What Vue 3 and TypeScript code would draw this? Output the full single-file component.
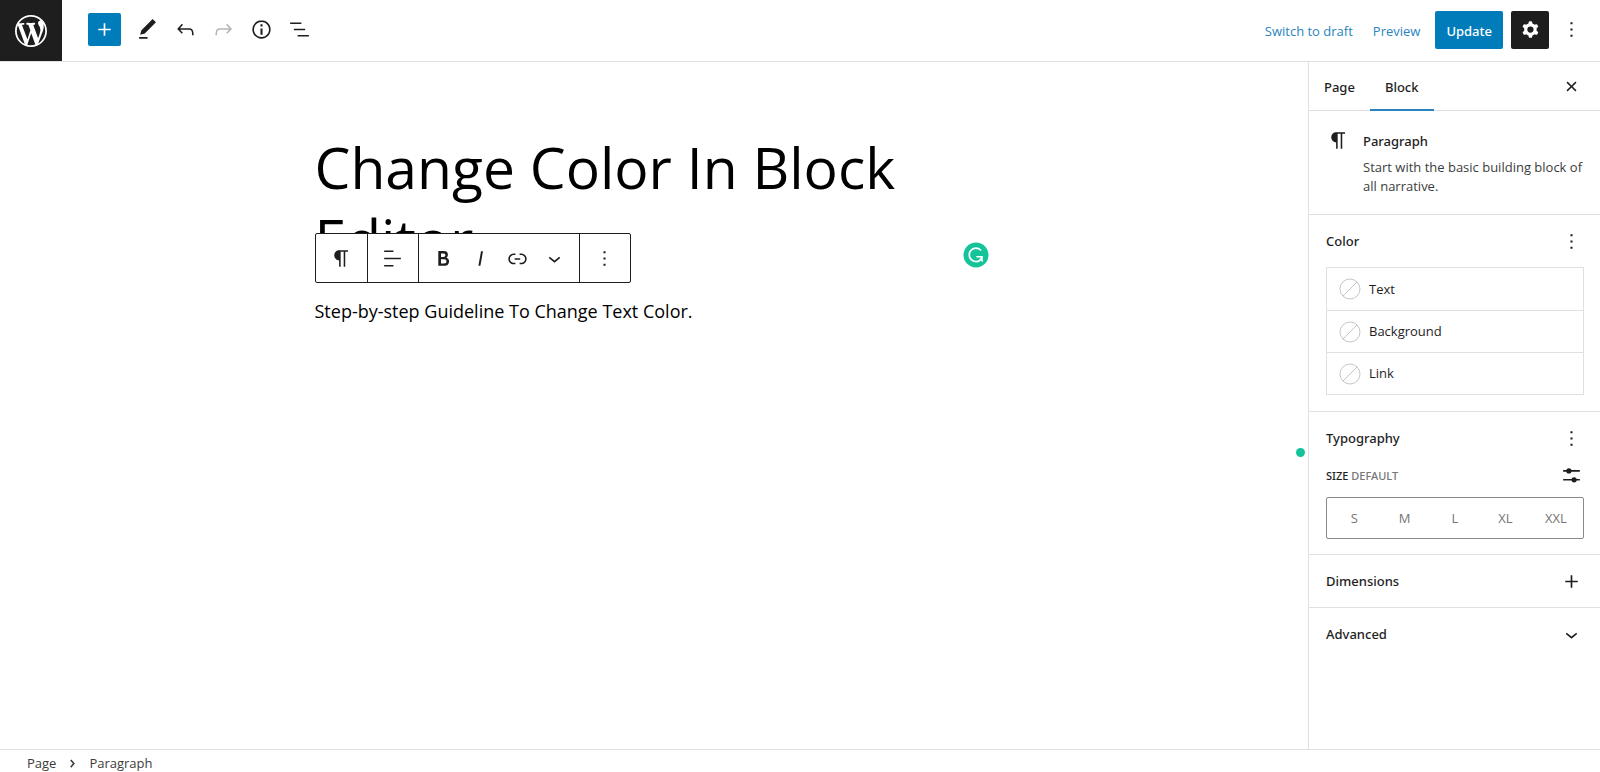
<script setup lang="ts">
import { ref } from 'vue'

const icons = {
  plus: 'M18 11.2h-5.2V6h-1.6v5.2H6v1.6h5.2V18h1.6v-5.2H18z',
  edit: 'M20.1 5.1L16.9 2 6.2 12.7l-1.3 4.4 4.5-1.3L20.1 5.1zM4 20.8h8v-1.5H4v1.5z',
  undo: 'M18.3 11.7c-.6-.6-1.4-.9-2.3-.9H6.7l2.9-3.3-1.1-1-4.5 5L8.5 16l1-1-2.7-2.7H16c.5 0 .9.2 1.3.5 1 1 1 3.4 1 4.5v.3h1.5v-.2c0-1.5 0-4.3-1.5-5.7z',
  redo: 'M15.6 6.5l-1.1 1 2.9 3.3H8c-.9 0-1.7.3-2.3.9-1.4 1.5-1.4 4.2-1.4 5.6v.2h1.5v-.3c0-1.1 0-3.5 1-4.5.3-.3.7-.5 1.3-.5h9.2L14.5 15l1.1 1.1 4.6-4.6-4.6-5z',
  info: 'M12 3.2c-4.8 0-8.8 3.9-8.8 8.8 0 4.8 3.9 8.8 8.8 8.8 4.8 0 8.8-3.9 8.8-8.8 0-4.8-4-8.8-8.8-8.8zm0 16c-4 0-7.2-3.3-7.2-7.2C4.8 8 8 4.8 12 4.8s7.2 3.3 7.2 7.2c0 4-3.2 7.2-7.2 7.2zM11 17h2v-6h-2v6zm0-8h2V7h-2v2z',
  list: 'M13.8 5.2H3v1.5h10.8V5.2zm-3.6 12v1.5H21v-1.5H10.2zm7.2-6H6.6v1.5h10.8v-1.5z',
  cog: 'M10.289 4.836A1 1 0 0111.275 4h1.306a1 1 0 01.987.836l.244 1.466c.787.26 1.503.679 2.108 1.218l1.393-.522a1 1 0 011.216.437l.653 1.13a1 1 0 01-.23 1.273l-1.148.944a6.025 6.025 0 010 2.435l1.149.946a1 1 0 01.23 1.272l-.653 1.13a1 1 0 01-1.216.437l-1.394-.522c-.605.54-1.32.958-2.108 1.218l-.244 1.466a1 1 0 01-.987.836h-1.306a1 1 0 01-.986-.836l-.244-1.466a5.995 5.995 0 01-2.108-1.218l-1.394.522a1 1 0 01-1.217-.436l-.653-1.131a1 1 0 01.23-1.272l1.149-.946a6.026 6.026 0 010-2.435l-1.148-.944a1 1 0 01-.23-1.272l.653-1.131a1 1 0 011.217-.437l1.393.522a5.994 5.994 0 012.108-1.218l.244-1.466zM14.929 12a3 3 0 11-6 0 3 3 0 016 0z',
  more: 'M13 19h-2v-2h2v2zm0-6h-2v-2h2v2zm0-6h-2V5h2v2z',
  close: 'M12 13.06l3.712 3.713 1.061-1.06L13.061 12l3.712-3.712-1.06-1.06L12 10.938 8.288 7.227l-1.061 1.06L10.939 12l-3.712 3.712 1.06 1.061L12 13.061z',
  paragraph: 'M18.3 4H9.9v-.1l-.9.2c-2.3.4-4 2.4-4 4.8s1.7 4.4 4 4.8l.7.1V20h1.5V5.5h2.9V20h1.5V5.5h2.7V4z',
  align: 'M4 19.8h8.9v-1.5H4v1.5zm8.9-15.6H4v1.5h8.9V4.2zm-8.9 7v1.5h16v-1.5H4z',
  bold: 'M14.7 11.3c1-.6 1.5-1.6 1.5-3 0-2.3-1.3-3.4-4-3.4H7v14h5.8c1.4 0 2.5-.3 3.3-1 .8-.7 1.2-1.7 1.2-2.9.1-1.9-.8-3.1-2.6-3.7zm-5.1-4h2.3c.6 0 1.1.1 1.4.4.3.3.5.7.5 1.2s-.2 1-.5 1.2c-.3.3-.8.4-1.4.4H9.6V7.3zm4.6 9c-.4.3-1 .4-1.7.4H9.6v-3.9h2.9c.7 0 1.3.2 1.7.5.4.3.6.8.6 1.5s-.2 1.2-.6 1.5z',
  italic: 'M12.5 5L10 19h1.9l2.5-14z',
  link: 'M15.6 7.2H14v1.5h1.6c2 0 3.7 1.7 3.7 3.7s-1.7 3.7-3.7 3.7H14v1.5h1.6c2.8 0 5.2-2.3 5.2-5.2 0-2.9-2.3-5.2-5.2-5.2zM4.7 12.4c0-2 1.7-3.7 3.7-3.7H10V7.2H8.4c-2.9 0-5.2 2.3-5.2 5.2 0 2.9 2.3 5.2 5.2 5.2H10v-1.5H8.4c-2 0-3.7-1.7-3.7-3.7zm4.6.9h5.3v-1.5H9.3v1.5z',
  down: 'M17.5 11.6L12 16l-5.5-4.4.9-1.2L12 14l4.5-3.6 1 1.2z',
  right: 'M10.86 8.04l3.42 3.99-3.42 3.99-1.14-.98 2.58-3.01-2.58-3.01z',
}

type IconName = keyof typeof icons

const documentTools: { icon: IconName; label: string; disabled?: boolean }[] = [
  { icon: 'edit', label: 'Tools' },
  { icon: 'undo', label: 'Undo' },
  { icon: 'redo', label: 'Redo', disabled: true },
  { icon: 'info', label: 'Details' },
  { icon: 'list', label: 'List View' },
]

const blockTools: { icon: IconName; label: string }[][] = [
  [{ icon: 'paragraph', label: 'Change block type' }],
  [{ icon: 'align', label: 'Align text' }],
  [
    { icon: 'bold', label: 'Bold' },
    { icon: 'italic', label: 'Italic' },
    { icon: 'link', label: 'Link' },
    { icon: 'down', label: 'More formatting' },
  ],
  [{ icon: 'more', label: 'Options' }],
]

const colors = ['Text', 'Background', 'Link']
const sizes = ['S', 'M', 'L', 'XL', 'XXL']
const size = ref('')
const tab = ref('Block')
</script>

<template>
  <div class="editor">
    <header class="topbar">
      <a class="logo" href="#" aria-label="View Pages">
        <svg viewBox="0 0 20 20" class="wp"><path d="M20 10c0-5.51-4.49-10-10-10C4.48 0 0 4.49 0 10c0 5.52 4.48 10 10 10 5.51 0 10-4.48 10-10zM7.78 15.37L4.37 6.22c.55-.02 1.17-.08 1.17-.08.5-.06.44-1.13-.06-1.11 0 0-1.45.11-2.37.11-.18 0-.37 0-.58-.01C4.12 2.69 6.87 1.11 10 1.11c2.33 0 4.45.87 6.05 2.34-.68-.11-1.65.39-1.65 1.58 0 .74.45 1.36.9 2.1.35.61.55 1.36.55 2.46 0 1.49-1.4 5-1.4 5l-3.03-8.37c.54-.02.82-.17.82-.17.5-.05.44-1.25-.06-1.22 0 0-1.44.12-2.38.12-.87 0-2.33-.12-2.33-.12-.5-.03-.56 1.2-.06 1.22l.92.08 1.26 3.41zM17.41 10c.24-.64.74-1.87.43-4.25.7 1.29 1.05 2.71 1.05 4.25 0 3.29-1.73 6.24-4.4 7.78.97-2.59 1.94-5.2 2.92-7.78zM6.1 18.09C3.12 16.65 1.11 13.53 1.11 10c0-1.3.23-2.48.72-3.59C3.25 10.3 4.67 14.2 6.1 18.09zm4.03-6.63l2.58 6.98c-.86.29-1.76.45-2.71.45-.79 0-1.57-.11-2.29-.33.81-2.38 1.62-4.74 2.42-7.1z" /></svg>
      </a>
      <div class="tools">
        <button class="inserter" type="button" aria-label="Toggle block inserter">
          <svg class="icon" viewBox="0 0 24 24"><path :d="icons.plus" /></svg>
        </button>
        <button v-for="t in documentTools" :key="t.icon" class="tool" type="button" :aria-label="t.label" :disabled="t.disabled">
          <svg class="icon" viewBox="0 0 24 24"><path :d="icons[t.icon]" /></svg>
        </button>
      </div>
      <div class="actions">
        <button class="text-button" type="button">Switch to draft</button>
        <button class="text-button" type="button">Preview</button>
        <button class="update" type="button">Update</button>
        <button class="settings" type="button" aria-label="Settings">
          <svg class="icon" viewBox="0 0 24 24"><path fill-rule="evenodd" :d="icons.cog" /></svg>
        </button>
        <button class="more" type="button" aria-label="Options">
          <svg class="icon" viewBox="0 0 24 24"><path :d="icons.more" /></svg>
        </button>
      </div>
    </header>

    <main class="canvas">
      <article class="document">
        <h1 class="title">Change Color In Block Editor</h1>
        <div class="block">
          <div class="block-toolbar" role="toolbar" aria-label="Block tools">
            <div v-for="(group, i) in blockTools" :key="i" class="group">
              <button v-for="t in group" :key="t.icon" class="tool" type="button" :aria-label="t.label">
                <svg class="icon" viewBox="0 0 24 24"><path :d="icons[t.icon]" /></svg>
              </button>
            </div>
          </div>
          <p class="paragraph">Step-by-step Guideline To Change Text Color.</p>
          <button class="checker" type="button" aria-label="Writing assistant">
            <svg viewBox="0 0 26 26">
              <circle cx="13" cy="13" r="12.5" fill="#15c39a" />
              <path d="M17.6 8A6.7 6.7 0 1 0 17 18.2" fill="none" stroke="#fff" stroke-width="1.7" stroke-linecap="round" />
              <path d="M13.4 14h6.4v6.2l-2.2-1.6-1.4-1.2 1.6-1.8h-4.4z" fill="#fff" />
            </svg>
          </button>
        </div>
      </article>
      <span class="status-dot"></span>
    </main>

    <aside class="sidebar">
      <div class="tabs">
        <button v-for="name in ['Page', 'Block']" :key="name" class="tab" :class="{ active: tab === name }" type="button" @click="tab = name">{{ name }}</button>
        <button class="mini close" type="button" aria-label="Close settings">
          <svg class="icon" viewBox="0 0 24 24"><path :d="icons.close" /></svg>
        </button>
      </div>

      <section class="card">
        <svg class="icon" viewBox="0 0 24 24"><path :d="icons.paragraph" /></svg>
        <div>
          <h2>Paragraph</h2>
          <p>Start with the basic building block of all narrative.</p>
        </div>
      </section>

      <section class="panel">
        <div class="panel-head">
          <h2>Color</h2>
          <button class="mini" type="button" aria-label="Color options">
            <svg class="icon" viewBox="0 0 24 24"><path :d="icons.more" /></svg>
          </button>
        </div>
        <div class="colors">
          <button v-for="c in colors" :key="c" class="color" type="button">
            <svg class="swatch" viewBox="0 0 22 22">
              <circle cx="11" cy="11" r="10" /><path d="M4 18L18 4" />
            </svg>
            {{ c }}
          </button>
        </div>
      </section>

      <section class="panel">
        <div class="panel-head">
          <h2>Typography</h2>
          <button class="mini" type="button" aria-label="Typography options">
            <svg class="icon" viewBox="0 0 24 24"><path :d="icons.more" /></svg>
          </button>
        </div>
        <div class="size-head">
          <span id="size-label">SIZE <span class="muted">DEFAULT</span></span>
          <button class="mini" type="button" aria-label="Set custom size">
            <svg class="icon" viewBox="0 0 24 24">
              <path d="M4 6.8h16v1.6H4zM4 15.3h16v1.6H4z" /><circle cx="9.5" cy="7.6" r="2.5" /><circle cx="14.5" cy="16.1" r="2.5" />
            </svg>
          </button>
        </div>
        <div class="sizes" role="radiogroup" aria-labelledby="size-label">
          <label v-for="s in sizes" :key="s" class="size">
            <input v-model="size" type="radio" name="size" :value="s" />{{ s }}
          </label>
        </div>
      </section>

      <button class="row" type="button">Dimensions<svg class="icon" viewBox="0 0 24 24"><path :d="icons.plus" /></svg></button>
      <button class="row last" type="button">Advanced<svg class="icon" viewBox="0 0 24 24"><path :d="icons.down" /></svg></button>
    </aside>

    <footer class="breadcrumb">
      <a href="#">Page</a>
      <svg class="icon" viewBox="0 0 24 24"><path :d="icons.right" /></svg>
      <a href="#">Paragraph</a>
    </footer>
  </div>
</template>

<style>
body {
  margin: 0;
  background: #fff;
}
</style>

<style scoped>
.editor {
  display: grid;
  grid-template: auto 1fr auto / 1fr 292px;
  min-height: 100vh;
  font: 13px/19px "Open Sans", "Noto Sans", sans-serif;
  color: #1e1e1e;
}
.editor *,
.editor {
  box-sizing: border-box;
}
button {
  font: inherit;
  color: inherit;
  background: none;
  border: 0;
  padding: 0;
  margin: 0;
  cursor: pointer;
}
h1,
h2,
p {
  margin: 0;
}
h2 {
  font-size: 13px;
  line-height: 19px;
}
h2,
.update,
.tab,
.size-head,
.row {
  font-family: "Noto Sans", "Open Sans", sans-serif;
  font-weight: 500;
}
a {
  color: inherit;
  text-decoration: none;
}
.icon {
  display: block;
  flex: none;
  width: 25px;
  height: 25px;
  fill: currentColor;
}
.topbar {
  grid-column: 1 / -1;
  display: flex;
  height: 62px;
  border-bottom: 1px solid #e0e0e0;
}
.logo {
  display: grid;
  place-items: center;
  width: 62px;
  background: #1e1e1e;
}
.wp {
  width: 32px;
  height: 32px;
  fill: #fff;
}
.tools,
.actions {
  display: flex;
  align-items: center;
  padding-bottom: 2px;
}
.tools {
  padding-left: 26px;
}
.inserter {
  display: grid;
  place-items: center;
  width: 33px;
  height: 33px;
  margin-right: 7px;
  border-radius: 2px;
  background: #007cba;
  color: #fff;
}
.tool {
  display: grid;
  place-items: center;
  width: 38px;
  height: 38px;
}
.tool:disabled {
  color: #b5b5b5;
}
.actions {
  margin-left: auto;
  padding-right: 16px;
}
.text-button {
  margin-right: 20px;
  color: #2a84c0;
}
.text-button + .text-button {
  margin-right: 15px;
}
.text-button,
.update {
  padding-top: 3px;
}
.update {
  height: 38px;
  padding-left: 11px;
  padding-right: 11px;
  border-radius: 2px;
  background: #007cba;
  color: #fff;
}
.settings {
  display: grid;
  place-items: center;
  width: 38px;
  height: 38px;
  margin: 0 10px 0 8px;
  border-radius: 2px;
  background: #1e1e1e;
  color: #fff;
}
.canvas {
  position: relative;
  padding: 69px 20px 0;
}
.document {
  max-width: 679px;
  margin: 0 auto;
  color: #000;
}
.title {
  font-size: 57px;
  line-height: 72px;
  font-weight: 400;
}
.block {
  position: relative;
  margin-top: 22px;
}
.block-toolbar {
  position: absolute;
  left: 0;
  bottom: calc(100% + 14px);
  display: flex;
  height: 50px;
  border: 1px solid #1e1e1e;
  border-radius: 2px;
  background: #fff;
  color: #1e1e1e;
}
.group {
  display: flex;
  align-items: center;
  justify-content: center;
  min-width: 51px;
  padding: 0 6px;
}
.group .tool {
  width: 37px;
}
.group + .group {
  border-left: 1px solid #1e1e1e;
}
.paragraph {
  font-size: 18px;
  line-height: 28px;
}
.checker {
  position: absolute;
  right: 5px;
  bottom: 57px;
  width: 26px;
  height: 26px;
}
.checker svg {
  display: block;
}
.status-dot {
  position: absolute;
  right: 3px;
  top: 386px;
  width: 9px;
  height: 9px;
  border-radius: 50%;
  background: #15c39a;
}
.sidebar {
  border-left: 1px solid #e0e0e0;
}
.tabs {
  display: flex;
  align-items: stretch;
  height: 49px;
  padding-right: 16px;
  border-bottom: 1px solid #e0e0e0;
}
.tab {
  padding: 3px 15px 0;
  margin-bottom: -1px;
  border-bottom: 2px solid transparent;
}
.tab.active {
  border-bottom-color: #2a84c0;
}
.mini {
  display: block;
}
.close {
  margin-left: auto;
}
.card {
  display: flex;
  gap: 12px;
  padding: 17px 16px 18px 17px;
  border-bottom: 1px solid #e0e0e0;
}
.card h2 {
  padding-top: 4px;
  margin-bottom: 7px;
}
.card p {
  color: #3c3c3c;
}
.panel {
  padding: 14px 16px 15px 17px;
  border-bottom: 1px solid #e0e0e0;
}
.panel-head,
.size-head {
  display: flex;
  align-items: center;
  justify-content: space-between;
}
.colors {
  margin-top: 13px;
  margin-bottom: 16px;
  border: 1px solid #e0e0e0;
}
.color {
  display: flex;
  align-items: center;
  gap: 8px;
  width: 100%;
  height: 42px;
  padding: 0 12px;
}
.color + .color {
  border-top: 1px solid #e0e0e0;
}
.swatch {
  width: 22px;
  height: 22px;
  fill: none;
  stroke: #c4c6c8;
}
.size-head {
  margin-top: 12px;
  font-size: 11px;
}
.muted {
  color: #757575;
}
.sizes {
  display: flex;
  height: 42px;
  margin-top: 9px;
  padding: 0 2px;
  border: 1px solid #8a8a8a;
  border-radius: 2px;
}
.colors:last-child {
  margin-bottom: 1px;
}
.size {
  position: relative;
  flex: 1;
  display: grid;
  place-items: center;
  color: #757575;
}
.size input {
  position: absolute;
  inset: 0;
  width: 100%;
  height: 100%;
  margin: 0;
  opacity: 0;
}
.row {
  display: flex;
  align-items: center;
  justify-content: space-between;
  width: 100%;
  height: 53px;
  padding: 0 16px 0 17px;
  border-bottom: 1px solid #e0e0e0;
}
.row.last {
  border-bottom: 0;
}
.breadcrumb {
  grid-column: 1 / -1;
  display: flex;
  align-items: center;
  gap: 4px;
  height: 23px;
  padding: 4px 27px 0;
  border-top: 1px solid #e0e0e0;
  color: #3c3c3c;
}
</style>
